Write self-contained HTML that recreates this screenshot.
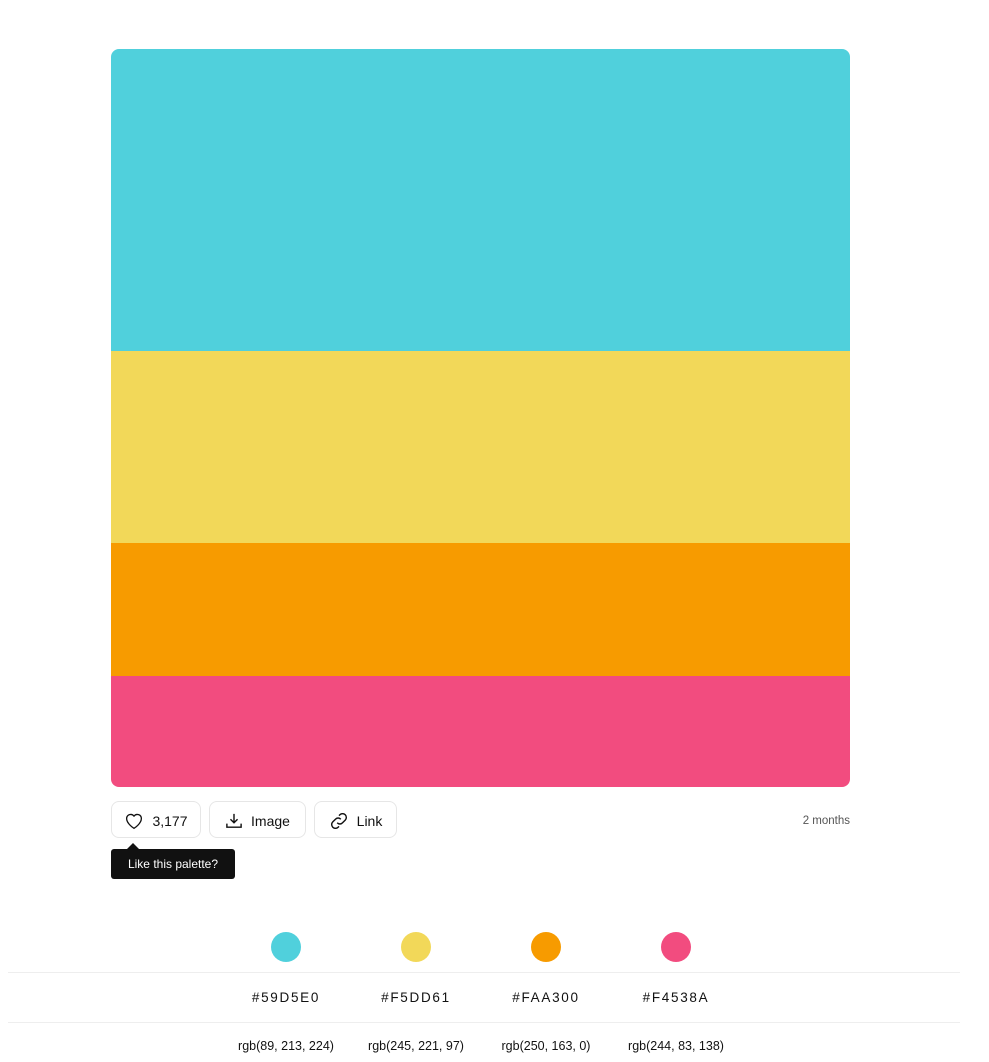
<!DOCTYPE html>
<html><head><style>
body{margin:0;background:#fff;font-family:"Liberation Sans",sans-serif;width:989px;height:1062px;position:relative;overflow:hidden;color:#111}
.pal{position:absolute;left:111px;top:49px;width:739px;height:738px;border-radius:8px;overflow:hidden}
.pal div{width:100%}
.btn{position:absolute;top:801px;height:37px;padding-top:2px;border:1px solid #e6e6e6;border-radius:8px;box-sizing:border-box;font-size:14px;display:flex;align-items:center;justify-content:center;gap:8px}
.tip{position:absolute;left:111px;top:849px;width:124px;height:30px;background:#111;border-radius:3px;color:#fff;font-size:12px;line-height:30px;text-align:center}
.tip:before{content:"";position:absolute;left:16px;top:-6px;border:6px solid transparent;border-top:0;border-bottom-color:#111}
.c{position:absolute;top:932px;width:30px;height:30px;border-radius:50%}
.hx,.rg{position:absolute;width:130px;text-align:center;margin-left:-65px}
.hx{top:990px;font-size:13.5px;letter-spacing:1.7px}
.rg{top:1039px;font-size:12.5px}
.ln{position:absolute;left:8px;width:952px;height:1px;background:#eee}
</style></head><body>
<div class="pal">
<div style="height:302px;background:#50d0dc"></div>
<div style="height:192px;background:#f2d859"></div>
<div style="height:133px;background:#f79b00"></div>
<div style="height:111px;background:#f24c7f"></div>
</div>
<div class="btn" style="left:111px;width:90px"><svg width="20" height="18" viewBox="0 0 24 22" fill="none" stroke="#111" stroke-width="1.6"><path d="M12 20s-9-5.5-9-12a5 5 0 0 1 9-3 5 5 0 0 1 9 3c0 6.5-9 12-9 12z"/></svg>3,177</div>
<div class="btn" style="left:209px;width:97px"><svg width="18" height="16" viewBox="0 0 20 18" fill="none" stroke="#111" stroke-width="1.6"><path d="M10 1v10M6 7l4 4 4-4M2 12v4h16v-4"/></svg>Image</div>
<div class="btn" style="left:314px;width:83px"><svg width="20" height="16" viewBox="0 0 22 18" fill="none" stroke="#111" stroke-width="1.6"><path d="M9 11a4 4 0 0 0 6 0l3-3a4 4 0 0 0-6-6l-1 1M13 7a4 4 0 0 0-6 0l-3 3a4 4 0 0 0 6 6l1-1"/></svg>Link</div>
<div style="position:absolute;right:139px;top:815px;font-size:11.5px;color:#555">2 months</div>
<div class="tip">Like this palette?</div>
<div class="c" style="left:271px;background:#50d0dc"></div>
<div class="c" style="left:401px;background:#f2d859"></div>
<div class="c" style="left:531px;background:#f79b00"></div>
<div class="c" style="left:661px;background:#f24c7f"></div>
<div class="ln" style="top:972px"></div>
<div class="ln" style="top:1022px"></div>
<div class="hx" style="left:286px">#59D5E0</div>
<div class="hx" style="left:416px">#F5DD61</div>
<div class="hx" style="left:546px">#FAA300</div>
<div class="hx" style="left:676px">#F4538A</div>
<div class="rg" style="left:286px">rgb(89, 213, 224)</div>
<div class="rg" style="left:416px">rgb(245, 221, 97)</div>
<div class="rg" style="left:546px">rgb(250, 163, 0)</div>
<div class="rg" style="left:676px">rgb(244, 83, 138)</div>
</body></html>
